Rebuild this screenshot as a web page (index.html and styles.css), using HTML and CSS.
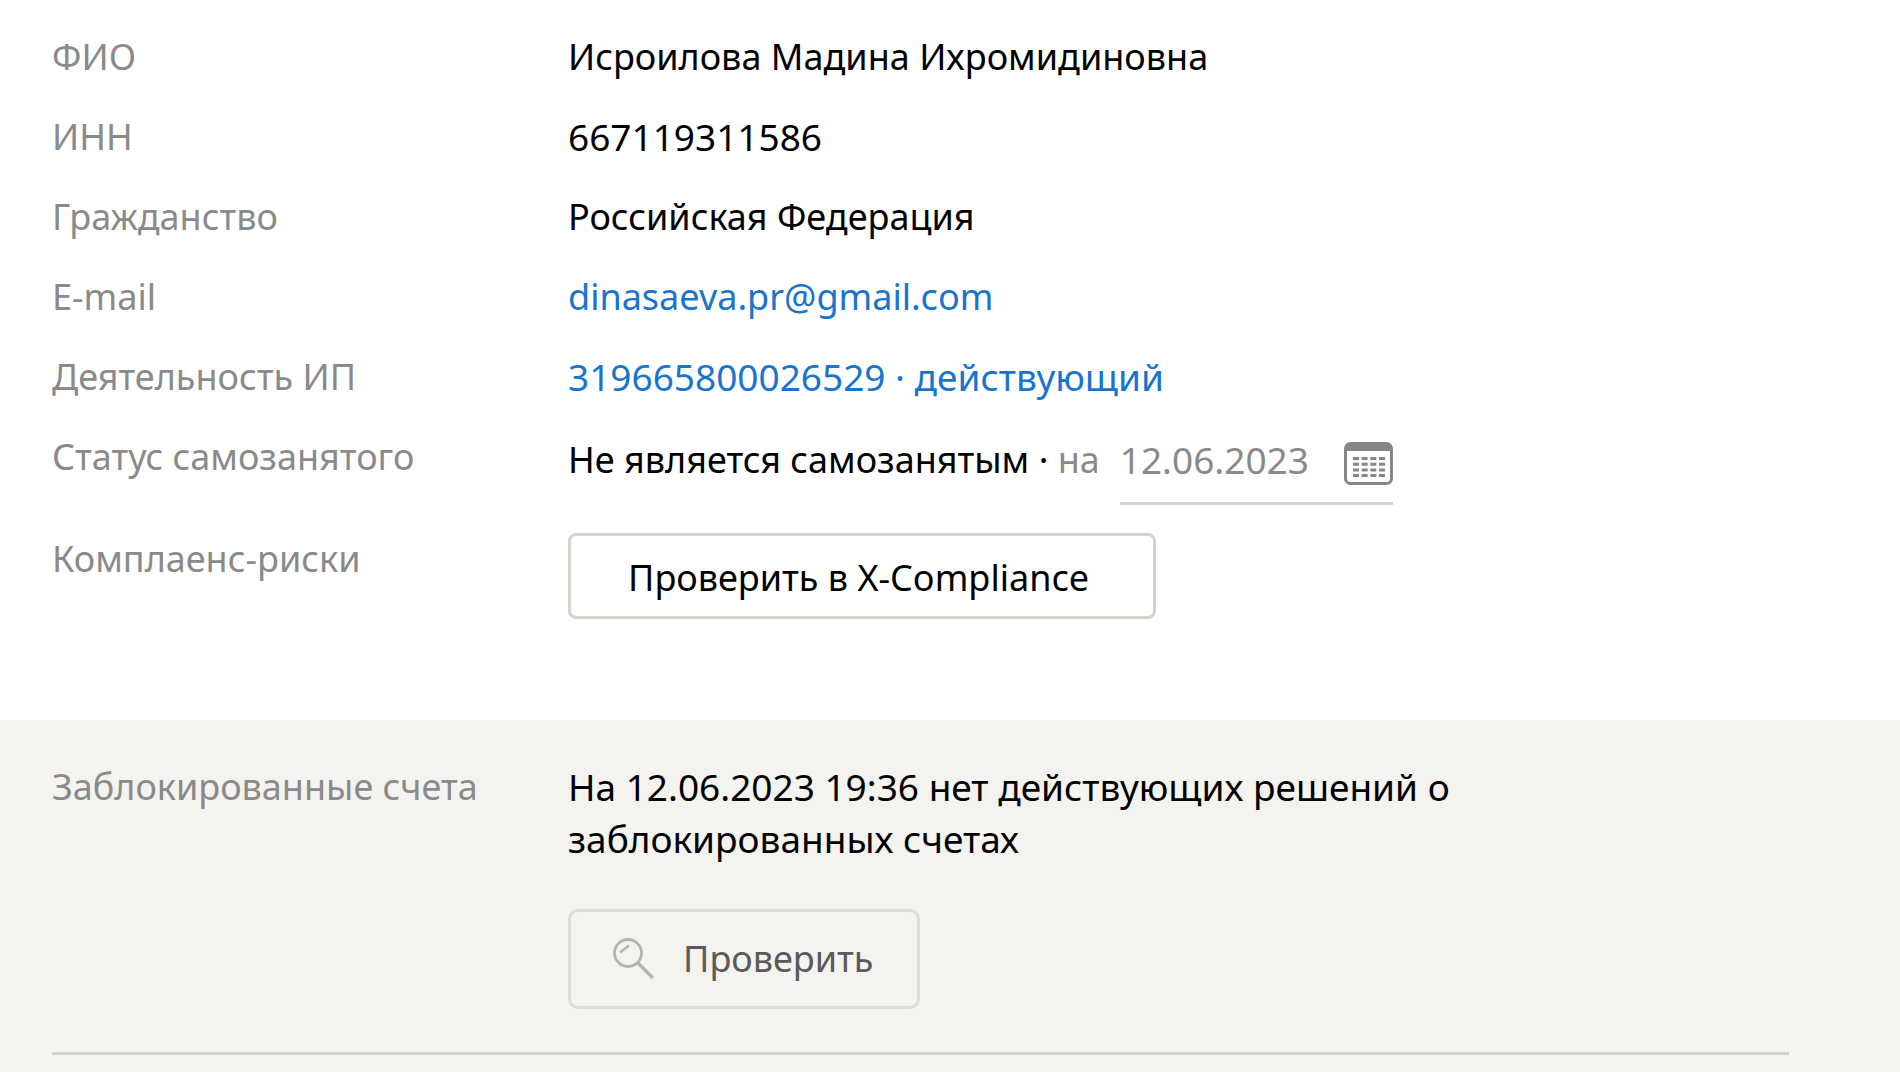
FILE: index.html
```html
<!DOCTYPE html>
<html lang="ru">
<head>
<meta charset="utf-8">
<meta name="viewport" content="width=device-width, initial-scale=1">
<title>Исроилова Мадина Ихромидиновна</title>
<link rel="stylesheet" href="styles.css">
</head>
<body>
<main class="page">
  <section class="person">
    <dl class="facts">
      <div class="row">
        <dt class="label">ФИО</dt>
        <dd class="value">Исроилова Мадина Ихромидиновна</dd>
      </div>
      <div class="row">
        <dt class="label">ИНН</dt>
        <dd class="value figures">667119311586</dd>
      </div>
      <div class="row">
        <dt class="label">Гражданство</dt>
        <dd class="value">Российская Федерация</dd>
      </div>
      <div class="row">
        <dt class="label">E-mail</dt>
        <dd class="value"><a class="link" href="mailto:dinasaeva.pr@gmail.com">dinasaeva.pr@gmail.com</a></dd>
      </div>
      <div class="row">
        <dt class="label">Деятельность ИП</dt>
        <dd class="value figures"><a class="link" href="#ip">319665800026529 · действующий</a></dd>
      </div>
      <div class="row">
        <dt class="label">Статус самозанятого</dt>
        <dd class="value status">
          <span>Не является самозанятым · <label class="muted" for="status-date">на</label></span>
          <span class="date-field">
            <input class="date-input figures" id="status-date" type="text" value="12.06.2023">
            <button class="date-button" type="button" aria-label="Открыть календарь">
              <svg class="calendar-icon" viewBox="0 0 49 43" aria-hidden="true">
                <rect x="1.5" y="1.5" width="46" height="40" rx="5" fill="none" stroke="#868686" stroke-width="3"/>
                <path d="M1 9V6a5 5 0 0 1 5-5h37a5 5 0 0 1 5 5v3z" fill="#868686"/>
                <path d="M9 16.500h32M9 22.200h32M9 27.900h32M9 33.600h32" fill="none" stroke="#868686" stroke-width="3" stroke-dasharray="6 2.670"/>
              </svg>
            </button>
          </span>
        </dd>
      </div>
      <div class="row">
        <dt class="label">Комплаенс-риски</dt>
        <dd class="value"><button class="button" type="button">Проверить в X-Compliance</button></dd>
      </div>
    </dl>
  </section>
  <section class="accounts">
    <dl class="facts">
      <div class="row">
        <dt class="label">Заблокированные счета</dt>
        <dd class="value">
          <p class="note figures">На 12.06.2023 19:36 нет действующих решений о заблокированных счетах</p>
          <button class="button button-search" type="button">
            <svg class="search-icon" viewBox="0 0 42 42" aria-hidden="true">
              <circle cx="15" cy="15" r="13.5" fill="none" stroke="#b4b3b0" stroke-width="2.8"/>
              <path d="M7 14.500L16 7.500" fill="none" stroke="#b4b3b0" stroke-width="2.600"/>
              <path d="M24.500 24.500L40 40" fill="none" stroke="#b4b3b0" stroke-width="3.400"/>
            </svg>
            Проверить
          </button>
        </dd>
      </div>
    </dl>
    <hr class="divider">
  </section>
</main>
</body>
</html>
```
FILE: styles.css
```css
* {
  box-sizing: border-box;
}

body {
  margin: 0;
  background: #fff;
  color: #000;
  font: 36px/52px "Noto Sans", "Open Sans", sans-serif;
}

.page {
  display: flex;
  flex-direction: column;
  min-height: 100vh;
}

.person {
  padding: 31px 52px 73px;
}

.accounts {
  flex: 1;
  padding: 41px 111px 16px 52px;
  background: #f5f3ef;
}

.facts {
  margin: 0;
}

.row {
  display: grid;
  grid-template-columns: 516px 1fr;
  margin-bottom: 28px;
}

.label,
.muted {
  color: #8a8a8a;
}

.value {
  margin: 0;
}

.link {
  color: #1874cf;
  text-decoration: none;
}

.status {
  display: flex;
  flex-wrap: wrap;
  align-items: flex-start;
  gap: 20px;
  padding-top: 3px;
}

.date-field {
  display: flex;
  align-items: flex-start;
  justify-content: space-between;
  width: 273px;
  height: 71px;
  border-bottom: 3px solid #d4d3cc;
}

.date-input {
  width: 208px;
  height: 52px;
  padding: 0;
  border: 0;
  background: none;
  color: #8a8a8a;
  font: inherit;
}

.figures {
  font-size: 37px;
}

.date-button {
  display: flex;
  padding: 8px 0 0;
  border: 0;
  background: none;
}

.calendar-icon {
  width: 49px;
  height: 43px;
}

.button {
  display: flex;
  align-items: center;
  height: 86px;
  padding: 3px 64px 0 57px;
  border: 3px solid #d4d4ca;
  border-radius: 8px;
  background: #fff;
  color: #000;
  font: inherit;
}

.note {
  max-width: 900px;
  margin: 0 0 44px;
}

.button-search {
  gap: 28px;
  height: 100px;
  padding: 0 44px 0 42px;
  border-color: #dedddb;
  border-radius: 10px;
  background: none;
  color: #5a5a58;
}

.search-icon {
  width: 42px;
  height: 42px;
}

.accounts .row {
  margin-bottom: 43px;
}

.divider {
  height: 3px;
  margin: 0;
  border: 0;
  background: #d4d3cf;
}
```
